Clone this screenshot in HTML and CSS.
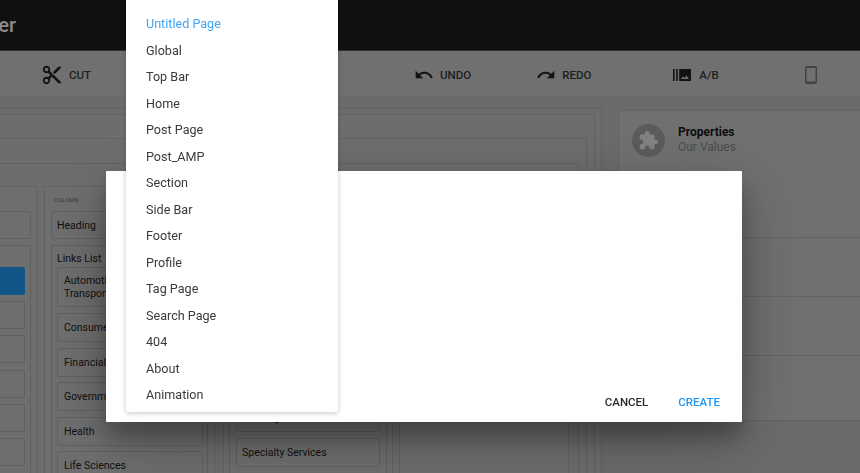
FILE: index.html
```html
<!DOCTYPE html>
<html lang="en">
<head>
<meta charset="utf-8">
<title>Page Builder</title>
<link rel="stylesheet" href="styles.css">
</head>
<body>
<div class="page">
  <header class="topbar"><div class="brand"><span>Builder</span></div></header>
  <nav class="toolbar">
    <div class="tool tool-cut">
      <svg class="ico ico-cut" viewBox="0 0 24 24"><path d="M9.64 7.64c.23-.5.36-1.05.36-1.64 0-2.21-1.79-4-4-4S2 3.79 2 6s1.79 4 4 4c.59 0 1.14-.13 1.64-.36L10 12l-2.36 2.36C7.14 14.13 6.59 14 6 14c-2.21 0-4 1.79-4 4s1.79 4 4 4 4-1.79 4-4c0-.59-.13-1.14-.36-1.64L12 14l7 7h3v-1L9.64 7.64zM6 8c-1.1 0-2-.89-2-2s.9-2 2-2 2 .89 2 2-.9 2-2 2zm0 12c-1.1 0-2-.89-2-2s.9-2 2-2 2 .89 2 2-.9 2-2 2zm6-7.5c-.28 0-.5-.22-.5-.5s.22-.5.5-.5.5.22.5.5-.22.5-.5.5zM19 3l-6 6 2 2 7-7V3z"/></svg>
      <span>CUT</span>
    </div>
    <div class="tool tool-undo">
      <svg class="ico" viewBox="0 0 24 24"><path d="M12.5 8c-2.65 0-5.05.99-6.9 2.6L2 7v9h9l-3.62-3.62c1.39-1.16 3.16-1.88 5.12-1.88 3.54 0 6.55 2.31 7.6 5.5l2.37-.78C21.08 11.03 17.15 8 12.5 8z"/></svg>
      <span>UNDO</span>
    </div>
    <div class="tool tool-redo">
      <svg class="ico" viewBox="0 0 24 24"><path d="M18.4 10.6C16.55 8.99 14.15 8 11.5 8c-4.65 0-8.58 3.03-9.96 7.22L3.9 16c1.05-3.19 4.05-5.5 7.6-5.5 1.95 0 3.73.72 5.12 1.88L13 16h9V7l-3.6 3.6z"/></svg>
      <span>REDO</span>
    </div>
    <div class="tool tool-ab">
      <svg class="ico ico-ab" viewBox="0 0 18 12"><path d="M0 0h1.6v12H0zM3.2 0h1.6v12H3.200zM6.200 0H18v12H6.200zM8 10h8l-2.600-3.400-2 2.500-1.400-1.600z" fill-rule="evenodd"/></svg>
      <span>A/B</span>
    </div>
    <div class="tool tool-device">
      <svg class="ico-phone" viewBox="0 0 12 18"><path d="M2 0h8a2 2 0 0 1 2 2v14a2 2 0 0 1-2 2H2a2 2 0 0 1-2-2V2a2 2 0 0 1 2-2zm-.5 2v13.500h9V2z" fill-rule="evenodd"/></svg>
    </div>
  </nav>
  <main class="workspace">
    <section class="canvas">
      <div class="frame frame-a">
        <div class="frame frame-b">
          <div class="frame frame-c">
            <div class="frame frame-d">
              <div class="columns">
                <div class="column col-one">
                  <div class="card card-top card-open"></div>
                  <div class="group group-open">
                    <div class="card card-list card-open card-active"></div>
                    <div class="card card-list card-open"></div>
                    <div class="card card-list card-open"></div>
                    <div class="card card-list card-open"></div>
                    <div class="card card-list card-open"></div>
                    <div class="card card-list card-open"></div>
                  </div>
                </div>
                <div class="column col-two">
                  <div class="col-label">COLUMN</div>
                  <div class="card card-top">Heading</div>
                  <div class="group group-links">
                    <div class="group-label">Links List</div>
                    <div class="card card-tall">Automotive &amp;<br>Transportation</div>
                    <div class="card card-item">Consumer</div>
                    <div class="card card-item">Financial</div>
                    <div class="card card-item">Government</div>
                    <div class="card card-item">Health</div>
                    <div class="card card-item">Life Sciences</div>
                  </div>
                </div>
                <div class="column col-three">
                  <div class="card card-top"></div>
                  <div class="group group-three">
                    <div class="card card-list"></div>
                    <div class="card card-list"></div>
                    <div class="card card-list"></div>
                    <div class="card card-list"></div>
                    <div class="card card-list">Training</div>
                    <div class="card card-last">Specialty Services</div>
                  </div>
                </div>
                <div class="column col-four"></div>
              </div>
            </div>
          </div>
        </div>
      </div>
    </section>
    <aside class="props">
      <div class="props-head">
        <div class="props-badge">
          <svg viewBox="0 0 24 24"><path d="M20.500 11H19V7c0-1.100-.9-2-2-2h-4V3.500C13 2.120 11.880 1 10.500 1S8 2.120 8 3.500V5H4c-1.100 0-1.990.9-1.990 2v3.800H3.500c1.490 0 2.700 1.210 2.700 2.700s-1.210 2.700-2.700 2.700H2V20c0 1.100.9 2 2 2h3.800v-1.500c0-1.490 1.210-2.700 2.700-2.700 1.490 0 2.700 1.210 2.700 2.700V22H17c1.100 0 2-.9 2-2v-4h1.500c1.380 0 2.500-1.120 2.500-2.500S21.880 11 20.500 11z"/></svg>
        </div>
        <div class="props-text">
          <div class="props-title">Properties</div>
          <div class="props-sub">Our Values</div>
        </div>
      </div>
      <div class="props-row"></div>
      <div class="props-row"></div>
      <div class="props-row"></div>
    </aside>
  </main>
</div>

<div class="scrim"></div>

<div class="dialog">
  <div class="dialog-actions">
    <button class="btn btn-cancel">CANCEL</button>
    <button class="btn btn-create">CREATE</button>
  </div>
</div>

<ul class="menu">
  <li class="menu-item is-selected">Untitled Page</li>
  <li class="menu-item">Global</li>
  <li class="menu-item">Top Bar</li>
  <li class="menu-item">Home</li>
  <li class="menu-item">Post Page</li>
  <li class="menu-item">Post_AMP</li>
  <li class="menu-item">Section</li>
  <li class="menu-item">Side Bar</li>
  <li class="menu-item">Footer</li>
  <li class="menu-item">Profile</li>
  <li class="menu-item">Tag Page</li>
  <li class="menu-item">Search Page</li>
  <li class="menu-item">404</li>
  <li class="menu-item">About</li>
  <li class="menu-item">Animation</li>
</ul>
</body>
</html>
```

FILE: styles.css
```css
* { box-sizing: border-box; }
html, body { margin: 0; height: 100%; overflow: hidden; }
body {
  font-family: Roboto, "Liberation Sans", sans-serif;
  color: #222;
  background: #c6c6c6;
}
.page { width: 860px; height: 473px; overflow: hidden; display: flex; flex-direction: column; }

.topbar { height: 51px; flex: none; background: #1e1e1e; border-bottom: 1px solid #555; }
.brand { width: 16px; height: 50px; display: flex; justify-content: flex-end; align-items: center; overflow: hidden; }
.brand span { font-size: 20px; font-weight: 500; color: #fff; white-space: nowrap; }

.toolbar { height: 45px; flex: none; display: flex; align-items: center; padding-top: 2px; background: #cfcfcf; font-size: 11.5px; font-weight: 500; color: #3a3a3a; }
.tool { display: flex; align-items: center; gap: 6px; flex: none; }
.ico { width: 20px; height: 20px; fill: #222; }
.ico-cut { width: 22px; height: 22px; }
.tool-cut { margin-left: 41px; }
.tool-undo { margin-left: 323px; }
.tool-redo { margin-left: 65px; }
.tool-ab { margin-left: 82px; gap: 8px; }
.ico-ab { width: 18px; height: 12px; }
.tool-device { margin-left: 86px; }
.ico-phone { width: 12px; height: 18px; fill: #7c7c7c; }

.workspace { flex: 1; min-height: 0; display: flex; gap: 16px; padding-top: 12px; }
.canvas { width: 602px; flex: none; }
.frame { border: 1px solid #b6b6b6; border-left: 0; border-bottom: 0; height: 100%; }
.frame-a { padding: 5px 6px 0 0; background: #cacaca; }
.frame-b { padding: 23px 7px 0 0; }
.frame-c { padding: 24px 7px 0 0; }
.frame-d { padding: 22px 9px 0 0; }
.columns { height: 100%; display: flex; }
.column { border: 1px solid #b6b6b6; border-bottom: 0; padding: 24px 5px 0 6px; flex: none; background: #cccccc; }
.col-one { width: 37px; margin-right: 7px; border-left: 0; padding-left: 0; }
.col-two { width: 171px; margin-right: 8px; padding-top: 8px; padding-right: 6px; }
.col-three { width: 170px; margin-right: 6px; padding-left: 5px; }
.col-four { width: 170px; }
.col-label { height: 10px; line-height: 10px; margin: 0 0 6px 3px; font-size: 6px; color: #6e6e6e; }

.card { border: 1px solid #b2b2b2; border-radius: 2px; font-size: 10.5px; line-height: 13px; color: #1c1c1c; padding: 0 5px; display: flex; align-items: center; }
.card-open { border-left: 0; border-radius: 0 2px 2px 0; }
.card-top { height: 28px; margin-bottom: 6px; }
.group { border: 1px solid #b2b2b2; border-bottom: 0; padding: 6px 4px 0 5px; height: 240px; }
.group-open { border-left: 0; padding: 21px 5px 0 0; }
.group-three { padding: 21px 6px 0; }
.group-label { font-size: 10.5px; margin-bottom: 2px; line-height: 13px; color: #1c1c1c; }
.card-list { height: 28px; margin-bottom: 6.2px; }
.card-last { height: 29px; }
.card-active { background: #21a0fa; border-color: #21a0fa; }
.card-tall, .card-item { padding-left: 6px; }
.card-tall { height: 40px; margin-bottom: 6px; }
.card-item { height: 29px; margin-bottom: 5.5px; }

.props { flex: 1; border: 1px solid #bdbdbd; border-right: 0; border-bottom: 0; margin-top: 2px; height: 311px; background: #cfcfcf; }
.props-head { height: 127px; padding: 13px 0 0 13px; display: flex; gap: 13px; border-bottom: 1px solid #b8b8b8; }
.props-badge { width: 33px; height: 33px; border-radius: 50%; background: #a8a8a8; display: flex; align-items: center; justify-content: center; }
.props-badge svg { width: 21px; height: 21px; fill: #f0f0f0; }
.props-title { font-size: 12px; font-weight: 700; line-height: 15px; margin-top: 1px; color: #1a1a1a; }
.props-sub { font-size: 12px; font-weight: 400; line-height: 15px; color: #8c8c8c; }
.props-row { height: 59px; border-bottom: 1px solid #b8b8b8; }
.props-row:last-child { height: 65px; }

.scrim { position: fixed; inset: 0; background: rgba(0,0,0,.46); }

.dialog {
  position: fixed; left: 106px; top: 171px; width: 636px; height: 251px;
  background: #fff; border-radius: 1px;
  box-shadow: 0 19px 60px rgba(0,0,0,.3), 0 15px 20px rgba(0,0,0,.22);
  display: flex; align-items: flex-end; justify-content: flex-end;
}
.dialog-actions { display: flex; gap: 14px; padding: 0 14px 2px 0; }
.btn { border: 0; background: none; padding: 0 8px; height: 36px; font: 500 11.5px Roboto, sans-serif; color: #2a2a2a; }
.btn-create { color: #2196f3; }

.menu {
  position: fixed; left: 126px; top: -3px; width: 212px; height: 415px;
  margin: 0; padding: 14.2px 0 0; list-style: none; background: #fff; border-radius: 2px;
  box-shadow: 0 1px 6px rgba(0,0,0,.12), 0 1px 4px rgba(0,0,0,.12);
}
.menu-item { height: 26.5px; line-height: 26.5px; padding-left: 20px; font-size: 12.6px; color: #3a3a3a; }
.is-selected { color: #42a5f5; }
```
